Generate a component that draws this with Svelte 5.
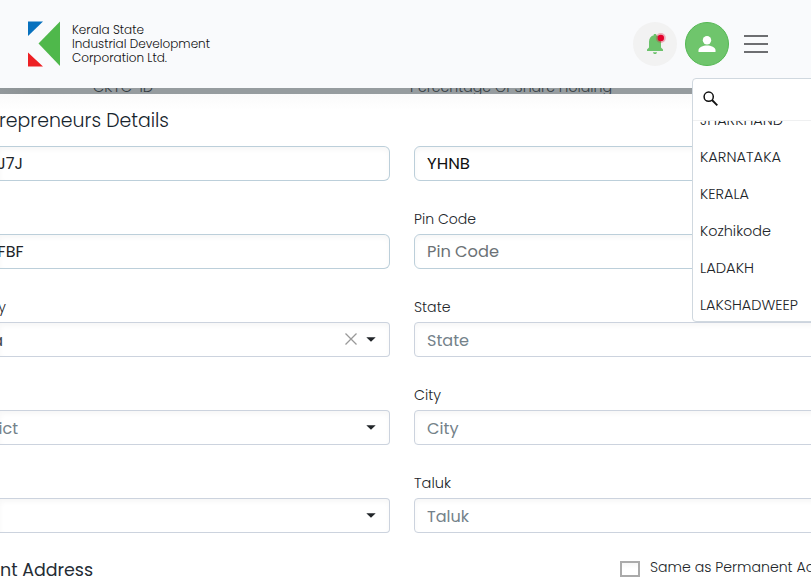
<script>
  const rows = [
    { leftLabel: '', left: 'J7J', leftEnd: 23, label: '', value: 'YHNB', valueWidth: 43, filled: true, kind: 'input' },
    { leftLabel: '', left: 'FBF', leftEnd: 23.5, label: 'Pin Code', labelWidth: 62, value: 'Pin Code', valueWidth: 72, kind: 'input' },
    { leftLabel: 'y', left: 'a', leftEnd: 3, clear: true, label: 'State', labelWidth: 36.5, value: 'State', valueWidth: 42, kind: 'select' },
    { leftLabel: '', left: 'ict', leftEnd: 18, muted: true, label: 'City', labelWidth: 27, value: 'City', valueWidth: 31.5, kind: 'select' },
    { leftLabel: '', left: '', leftEnd: 0, label: 'Taluk', labelWidth: 37, value: 'Taluk', valueWidth: 42, kind: 'select' }
  ];
  const states = [
    ['JHARKHAND', 83],
    ['KARNATAKA', 81],
    ['KERALA', 49],
    ['Kozhikode', 71],
    ['LADAKH', 54],
    ['LAKSHADWEEP', 98]
  ];
</script>

{#snippet line(text, width, size, weight = 400)}
  <svg class="line" {width} height={size * 1.5} style:font-size="{size}px" style:font-weight={weight} aria-label={text}>
    <text x="0" y={size * 1.05} textLength={width} lengthAdjust="spacingAndGlyphs">{text}</text>
  </svg>
{/snippet}

<div class="page">
  <header>
    <div class="brand">
      <svg width="32" height="46" viewBox="0 0 32 46">
        <path d="M0 0.5H15L0 15Z" fill="#0871be" />
        <path d="M32 .5V45L10.5 22.5Z" fill="#4fb84b" />
        <path d="M0 31.5L15 45.5H0Z" fill="#ed2024" />
      </svg>
      <div class="name">
        {@render line('Kerala State', 72, 12.5, 300)}
        {@render line('Industrial Development', 138, 12.5, 300)}
        {@render line('Corporation Ltd.', 95, 12.5, 300)}
      </div>
    </div>
    <div class="actions">
      <div class="bell">
        <svg width="44" height="44" viewBox="0 0 44 44">
          <path d="M14 29v-1.500l2-2V20c0-3.400 1.800-6 4.800-6.700V12h2.400v1.300c3 .7 4.800 3.300 4.800 6.700v5.500l2 2V29zM20 30.200h4c0 1-.9 1.800-2 1.800s-2-.8-2-1.800z" fill="#6cc26b" />
          <circle cx="27.800" cy="16" r="5" fill="#dc143c" opacity=".3" />
          <circle cx="27.800" cy="16" r="3.200" fill="#e4002b" />
        </svg>
      </div>
      <div class="user">
        <svg width="18" height="16" viewBox="0 0 18 16" fill="#fff">
          <circle cx="9" cy="4.200" r="4.200" />
          <path d="M.5 16v-1.900C.5 11.100 5 9.400 9 9.400s8.500 1.700 8.500 4.700V16z" />
        </svg>
      </div>
      <div class="menu"><i></i><i></i><i></i></div>
    </div>
  </header>

  <div class="strip">
    <div class="shade"></div>
    <div class="cell">{@render line('CKYC-ID', 60, 14, 300)}</div>
    <div class="cell">{@render line('Percentage Of Share Holding', 202, 14, 300)}</div>
  </div>

  <main>
    <h2>{@render line('repreneurs Details', 170, 20, 300)}</h2>
    {#each rows as row}
      <div class="row">
        <div class="col">
          <div class="label left">{row.leftLabel}</div>
          <div class="field left" class:select={row.kind === 'select'} class:muted={row.muted}>
            <span class="tail" style:width="{row.leftEnd}px">{row.left}</span>
            {#if row.kind === 'select'}
              <div class="marks">
                {#if row.clear}
                  <svg width="12" height="12" viewBox="0 0 12 12"><path d="M.5.5l11 11M11.500.5l-11 11" stroke="#999" stroke-width="1.300" /></svg>
                {/if}
                <svg width="10" height="5" viewBox="0 0 10 5"><path d="M.3.3h9.400L5 4.700z" fill="#212529" /></svg>
              </div>
            {/if}
          </div>
        </div>
        <div class="col right">
          <div class="label">{#if row.label}{@render line(row.label, row.labelWidth, 14, 300)}{/if}</div>
          <div class="field right" class:select={row.kind === 'select'} class:filled={row.filled}>
            {@render line(row.value, row.valueWidth, 16)}
          </div>
        </div>
      </div>
    {/each}
    <div class="bottom">
      <div class="address">{@render line('nt Address', 93, 18)}</div>
      <div class="same">
        <span class="check"></span>
        {@render line('Same as Permanent Address', 203, 14, 300)}
      </div>
    </div>
  </main>

  <aside>
    <div class="search">
      <svg width="16" height="16" viewBox="0 0 16 16" fill="none" stroke="#111">
        <circle cx="5.700" cy="5.700" r="4.600" stroke-width="1.500" />
        <path d="M9 9l5.300 5.300" stroke-width="1.900" />
      </svg>
    </div>
    <div class="options">
      {#each states as [name, width]}
        <div class="option">{@render line(name, width, 14, 300)}</div>
      {/each}
    </div>
  </aside>
</div>

<style>
  :global(body) { margin: 0; overflow: hidden; }
  .page { position: relative; width: 811px; height: 581px; overflow: hidden; background: #fff; font-family: Poppins, Inter, sans-serif; color: #212529; }
  .line { display: block; flex: none; fill: currentColor; overflow: visible; }
  header { height: 88px; background: #f9fafc; display: flex; justify-content: space-between; box-sizing: border-box; padding: 21px 43px 0 28px; }
  .brand { display: flex; gap: 12px; }
  .name { display: flex; flex-direction: column; color: #111; }
  .name .line { height: 14px; }
  .actions { display: flex; gap: 8px; padding-top: 1px; }
  .bell, .user { width: 44px; height: 44px; border-radius: 50%; background: #f2f2f2; }
  .user { box-sizing: border-box; background: #6fc56c; border: 1px solid #55b854; display: flex; justify-content: center; padding-top: 13px; }
  .menu { width: 24px; margin-left: 7px; padding-top: 13px; display: flex; flex-direction: column; gap: 6px; }
  .menu i { height: 2px; background: #6d6e71; }
  .strip { height: 6px; background: #969c9f; overflow: hidden; display: flex; color: #343c42; }
  .shade { width: 40px; height: 6px; background: linear-gradient(90deg, #92989b, #8b9193); }
  .cell { width: 317px; padding-left: 53px; box-sizing: border-box; margin-top: -11px; }
  main { background: linear-gradient(#fafafa, #fff 16px); height: 487px; overflow: hidden; }
  h2 { margin: 0; height: 26px; padding-top: 12px; color: #17242d; margin-left: -1px; }
  .row { display: flex; gap: 24px; height: 88px; }
  .row:first-of-type { height: 49px; }
  .row:first-of-type .label { display: none; }
  .row:first-of-type .field { margin-top: 14px; }
  .col { width: 390px; flex: none; }
  .col.right { width: 420px; }
  .label { height: 53px; box-sizing: border-box; padding-top: 28px; color: #212529; font-size: 14px; font-weight: 300; }
  .label.left { width: 6px; display: flex; justify-content: flex-end; line-height: 21px; }
  .field { height: 35px; box-sizing: border-box; border: 1px solid #bccfda; border-radius: 6px; display: flex; align-items: center; box-shadow: inset 0 3px 5px #00000009; color: #6c7276; font-size: 16px; }
  .field.left { border-left: 0; border-radius: 0 6px 6px 0; justify-content: space-between; color: #212529; }
  .field.select { border-color: #ccd3de; border-radius: 4px; color: #74828a; }
  .field.left.select { border-radius: 0 4px 4px 0; color: #444b50; border-left: 0; }
  .field.left.muted { color: #74828a; }
  .field.right { padding-left: 12px; }
  .field.right.select { padding-top: 2px; }
  .field.right.filled { color: #111; }
  .tail { display: flex; justify-content: flex-end; }
  .select .tail { padding-top: 1px; }
  .marks { display: flex; align-items: center; gap: 9px; padding: 0 13px 1px 0; }
  .bottom { display: flex; justify-content: space-between; height: 48px; padding-top: 24px; }
  .address { color: #252d35; }
  .same { display: flex; gap: 10px; width: 191px; color: #212529; }
  .check { width: 20px; height: 16px; flex: none; box-sizing: border-box; border: 2px solid #aaa; background: linear-gradient(#f6f6f6, #fff 6px); margin-top: 4px; }
  aside { position: absolute; left: 692px; top: 78px; width: 160px; height: 244px; box-sizing: border-box; border: 1px solid #d0d8df; border-radius: 4px; background: #fff; overflow: hidden; }
  .search { height: 42px; box-sizing: border-box; border-bottom: 1px solid #eff0f1; padding: 12px 0 0 10px; line-height: 0; }
  .options { height: 200px; overflow: hidden; color: #212529; }
  .option { height: 37px; padding-left: 7px; display: flex; align-items: center; }
  .option:first-child { margin-top: -19px; }
</style>
